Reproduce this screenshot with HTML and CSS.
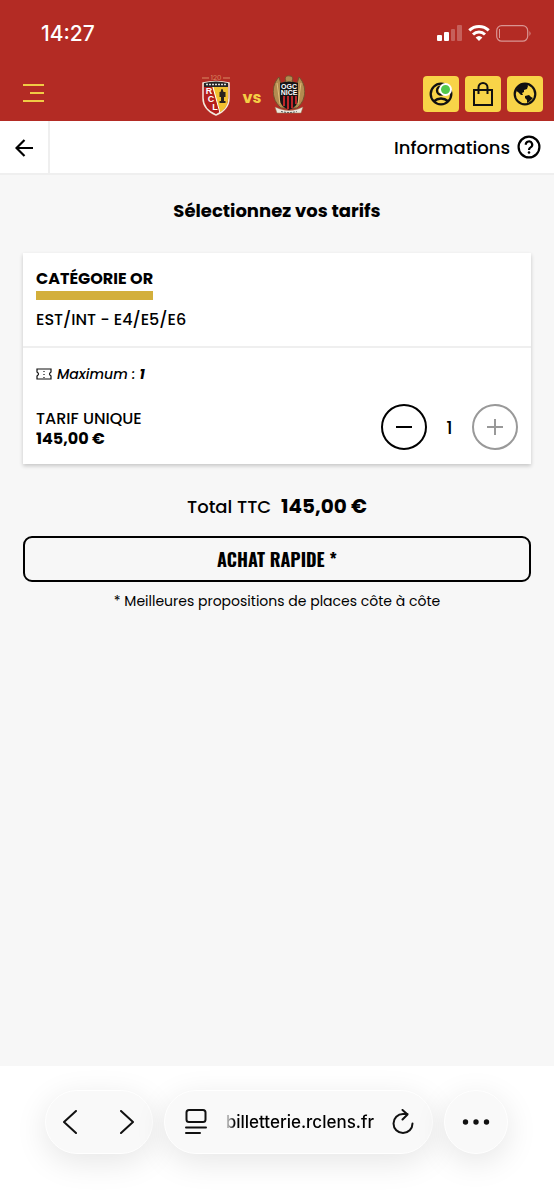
FILE: index.html
```html
<!DOCTYPE html>
<html lang="fr">

<head>
    <meta charset="UTF-8">
    <meta name="viewport" content="width=device-width, initial-scale=1.0">
    <title>Billetterie RC Lens</title>
    <link rel="stylesheet" href="styles.css">
</head>

<body>
    <header class="top">
        <div class="status">
            <span class="time">14:27</span>
            <svg class="status-icons" width="96" height="20" viewBox="0 0 96 20" fill="#fff">
                <rect x="1" y="12" width="5" height="6" rx="1" />
                <rect x="8" y="9" width="5" height="9" rx="1" />
                <rect x="15" y="6" width="4" height="12" rx="1" opacity=".25" />
                <rect x="21" y="2" width="5" height="16" rx="1" opacity=".25" />
                <g fill="none" stroke="#fff" stroke-width="3">
                    <path d="M33.3 7.3a14 14 0 0 1 19.4 0" />
                    <path d="M37 11.500a8.700 8.700 0 0 1 12 0" />
                </g>
                <path d="M43 18l-3.400-3.500a5 5 0 0 1 6.800 0z" />
                <g opacity=".5">
                    <rect x="60.700" y="2.700" width="31" height="15.500" rx="5" fill="none" stroke="#fff" stroke-width="1.200" />
                    <path d="M93.500 8v5q2-2.500 0-5z" />
                    <rect x="63" y="6" width="1" height="9" />
                </g>
            </svg>
        </div>
        <div class="navbar">
            <button class="menu" aria-label="Menu">
                <svg width="22" height="20" viewBox="0 0 22 20" stroke="#f0cb45" stroke-width="2">
                    <path d="M0 1h21M7 9h14M0 17h21" />
                </svg>
            </button>
            <div class="match">
                <svg width="30" height="44" viewBox="0 0 30 44">
                    <text x="15" y="7" class="years">120</text>
                    <path d="M1 5h7M22 5h7" stroke="#d98a62" stroke-width="1" />
                    <path d="M2 10q13-3 26 0v15c0 9-6 14-13 17C8 39 2 34 2 25z" fill="#b5201c" stroke="#f3e9dc" stroke-width="1.500" />
                    <path d="M11 13h16v12c0 8-4 12-8 14z" fill="#f2c230" />
                    <path d="M3 10q12-3 24 0v4H3z" fill="#252525" />
                    <path d="M5 11.500h20" stroke="#ddd" stroke-width="1.500" stroke-dasharray="2 1" />
                    <path d="M12 14l7 26" stroke="#fff" stroke-width="1" />
                    <path d="M20.500 16h1l1 3h2v5h-1.500v4h1.500v2h-6v-2H20v-4h-1.500v-5h1z" fill="#29231c" />
                    <g class="crest-letters">
                        <text x="8" y="21">R</text>
                        <text x="10" y="29">C</text>
                        <text x="14" y="37">L</text>
                    </g>
                </svg>
                <span class="vs">vs</span>
                <svg width="32" height="42" viewBox="0 0 32 42">
                    <path d="M13 7C11 4 13 1 17 2c3 0 3 3 2 5l5 3 2-7c5 5 7 13 5 20-1 5-4 8-7 11H8c-3-3-6-6-7-11C-1 16 1 8 6 3l2 7z" fill="#b38b50" stroke="#72512e" stroke-width="1" />
                    <path d="M4 9l3 21M28 9l-3 21" stroke="#e0bd7a" stroke-width="1" />
                    <path d="M7 9q9-3 18 0v17q0 6-9 10-9-4-9-10z" fill="#171415" />
                    <path d="M11 22v10M15 22v13M19 22v12M23 22v8" stroke="#bd2528" stroke-width="2" />
                    <g class="nice-letters">
                        <text x="16" y="15">OGC</text>
                        <text x="16" y="21">NICE</text>
                    </g>
                    <path d="M2 33l5 2q9 3 18 0l5-2-2 6H4z" fill="#ece8df" stroke="#99794f" stroke-width=".5" />
                    <path d="M8 37.500q8 2 16 0" fill="none" stroke="#555" stroke-width="1" stroke-dasharray="2 1" />
                </svg>
            </div>
            <div class="actions">
                <button class="action" aria-label="Mon compte">
                    <svg width="24" height="24" viewBox="0 0 24 24" fill="none" stroke="#111" stroke-width="2.300">
                        <circle cx="12" cy="12" r="10.300" />
                        <circle cx="12" cy="8.500" r="4" />
                        <path d="M4.500 19.500q7.500-6 15 0" />
                    </svg>
                    <span class="online"></span>
                </button>
                <button class="action" aria-label="Panier">
                    <svg width="24" height="26" viewBox="0 0 24 26" fill="none" stroke="#111" stroke-width="2">
                        <path d="M3 9h18v15H3zM7.500 13V6.500a4.500 4.500 0 0 1 9 0V13" />
                    </svg>
                </button>
                <button class="action" aria-label="Langue">
                    <svg width="24" height="24" viewBox="0 0 24 24" fill="#111">
                        <circle cx="12" cy="12" r="10.300" fill="none" stroke="#111" stroke-width="2.200" />
                        <path d="M5 5l4-3 5 0 1 2-1 3-3 1v2l-2 1 1 2-2 0-3-3-2-1zM12 14l4-1 2 2 2 1-4 4-2 1v-3l-2-2z" />
                    </svg>
                </button>
            </div>
        </div>
    </header>

    <nav class="subbar">
        <a href="#" class="back" aria-label="Retour">
            <svg width="18" height="18" viewBox="0 0 18 18" fill="none" stroke="#000" stroke-width="2.200">
                <path d="M18 9H2M9.500 1L1.500 9l8 8" />
            </svg>
        </a>
        <a href="#" class="infos">Informations
            <svg width="24" height="24" viewBox="0 0 24 24" fill="none" stroke="#000" stroke-width="2.200">
                <circle cx="12" cy="12" r="10.400" />
                <path d="M8.800 9.800a3.200 3.200 0 1 1 4.800 2.600Q12 13.300 12 15" />
                <circle cx="12" cy="17.500" r="1.300" fill="#000" stroke="none" />
            </svg>
        </a>
    </nav>

    <main>
        <h1>Sélectionnez vos tarifs</h1>

        <section class="card">
            <div class="category">
                <h2>CATÉGORIE OR</h2>
                <p>EST/INT - E4/E5/E6</p>
            </div>
            <div class="rates">
                <p class="maximum">
                    <svg width="16" height="12" viewBox="0 0 16 12" fill="none" stroke="#111" stroke-width="1.200">
                        <path d="M1 1h14v3q-3 2 0 4v3H1V8q3-2 0-4z" />
                        <path d="M8 3v7" stroke-dasharray="1 2" />
                    </svg>
                    <span>Maximum : <b>1</b></span>
                </p>
                <div class="rate">
                    <div class="rate-name">TARIF UNIQUE<br><b>145,00 €</b></div>
                    <div class="stepper">
                        <button id="minus" aria-label="Retirer une place">
                            <svg width="16" height="16" viewBox="0 0 16 16" stroke="currentColor" stroke-width="2">
                                <path d="M0 8h16" />
                            </svg>
                        </button>
                        <output>1</output>
                        <button id="plus" aria-label="Ajouter une place" disabled>
                            <svg width="16" height="16" viewBox="0 0 16 16" stroke="currentColor" stroke-width="2">
                                <path d="M0 8h16M8 0v16" />
                            </svg>
                        </button>
                    </div>
                </div>
            </div>
        </section>

        <p class="total">Total TTC <b>145,00 €</b></p>
        <button class="buy">ACHAT RAPIDE *</button>
        <p class="note">* Meilleures propositions de places côte à côte</p>
    </main>

    <footer class="browser">
        <div class="pill history">
            <button aria-label="Précédent">
                <svg width="14" height="24" viewBox="0 0 14 24"><path d="M13 1L1 12l12 11" /></svg>
            </button>
            <button aria-label="Suivant">
                <svg width="14" height="24" viewBox="0 0 14 24"><path d="M1 1l12 11L1 23" /></svg>
            </button>
        </div>
        <div class="pill address">
            <button aria-label="Options de page">
                <svg width="22" height="26" viewBox="0 0 22 26">
                    <rect x="1.500" y="1" width="19" height="12" rx="2.500" />
                    <path d="M1 18.500h20M1 24h14" />
                </svg>
            </button>
            <a href="#" class="url"><span>billetterie.rclens.fr</span></a>
            <button aria-label="Actualiser">
                <svg width="22" height="26" viewBox="0 0 22 26">
                    <path d="M20.500 14.500a9.500 9.500 0 1 1-9.500-9.500h4.500M10.500 1l5 4.500-5 5" />
                </svg>
            </button>
        </div>
        <button class="pill more" aria-label="Plus">
            <svg width="28" height="6" viewBox="0 0 28 6" class="dots">
                <circle cx="3.500" cy="3" r="2.700" />
                <circle cx="14" cy="3" r="2.700" />
                <circle cx="24.500" cy="3" r="2.700" />
            </svg>
        </button>
    </footer>
</body>

</html>
```

FILE: styles.css
```css
* {
    box-sizing: border-box;
}

body {
    margin: 0;
    min-height: 100vh;
    display: flex;
    flex-direction: column;
    background-color: #f7f7f7;
    color: #000;
    font-family: 'Poppins', 'Inter', sans-serif;
    font-size: 16px;
}

h1,
h2,
p {
    margin: 0;
}

a {
    color: inherit;
    text-decoration: none;
}

button {
    display: flex;
    align-items: center;
    justify-content: center;
    padding: 0;
    border: 0;
    background: none;
    color: inherit;
    font: inherit;
    cursor: pointer;
}

svg {
    display: block;
    flex: none;
}

/* red header */
.top {
    background-color: #b32b24;
}

.status {
    display: flex;
    align-items: center;
    justify-content: space-between;
    height: 66px;
    padding: 0 22px 0 41px;
    color: #fff;
}

.time {
    font-family: 'Inter', sans-serif;
    font-size: 21px;
    font-weight: 500;
}

.navbar {
    display: grid;
    grid-template-columns: 1fr auto 1fr;
    align-items: center;
    height: 55px;
    padding: 0 11px 0 23px;
}

.menu {
    justify-self: start;
}

.match {
    display: flex;
    align-items: center;
    gap: 12px;
    padding: 3px 60px 0 0;
}

.vs {
    padding-top: 4px;
    color: #f5ce45;
    font-size: 16px;
    font-weight: 700;
}

.years {
    fill: #d98a62;
    font-size: 7px;
    text-anchor: middle;
}

.crest-letters,
.nice-letters {
    fill: #fff;
    font-family: 'Liberation Sans', sans-serif;
    font-size: 9px;
    font-weight: 700;
    text-anchor: middle;
}

.nice-letters {
    font-size: 7px;
}

.actions {
    display: flex;
    justify-content: flex-end;
    gap: 6px;
}

.action {
    position: relative;
    width: 36px;
    height: 36px;
    border-radius: 4px;
    background-color: #f8d448;
}

.online {
    position: absolute;
    top: 7px;
    right: 7px;
    width: 13px;
    height: 13px;
    border: 2px solid #fff;
    border-radius: 50%;
    background-color: #52c84b;
}

/* back / informations */
.subbar {
    display: flex;
    justify-content: space-between;
    height: 54px;
    border-bottom: 2px solid #efefef;
    background-color: #fff;
}

.back {
    display: flex;
    align-items: center;
    justify-content: center;
    width: 50px;
    padding-top: 2px;
    border-right: 2px solid #efefef;
}

.infos {
    display: flex;
    align-items: center;
    gap: 7px;
    padding-right: 13px;
    font-size: 18px;
    font-weight: 500;
}

main {
    flex: 1;
    padding: 24px 23px;
}

h1 {
    margin-bottom: 30px;
    font-size: 18px;
    font-weight: 700;
    line-height: 24px;
    text-align: center;
}

.card {
    background-color: #fff;
    box-shadow: 0 2px 4px rgba(0, 0, 0, 0.2);
}

.category {
    padding: 14px 13px;
    border-bottom: 2px solid #efefef;
}

h2 {
    width: fit-content;
    margin-bottom: 8px;
    border-bottom: 9px solid #d3af3b;
    font-size: 16px;
    font-weight: 700;
    line-height: 24px;
}

.category p {
    font-weight: 500;
    line-height: 24px;
}

.rates {
    padding: 14px 13px;
}

.maximum {
    display: flex;
    align-items: center;
    gap: 5px;
    font-size: 14px;
    font-style: italic;
    font-weight: 500;
    line-height: 24px;
}

.rate {
    display: flex;
    align-items: center;
    justify-content: space-between;
    margin-top: 18px;
}

.rate-name {
    padding-top: 4px;
    font-weight: 500;
    line-height: 20px;
}

.stepper {
    display: flex;
    align-items: center;
}

.stepper button {
    width: 46px;
    height: 46px;
    border: 2px solid #000;
    border-radius: 50%;
}

.stepper button:disabled {
    border-color: #999;
    color: #999;
    cursor: default;
}

.stepper output {
    width: 45px;
    font-size: 18px;
    font-weight: 500;
    text-align: center;
}

.total {
    margin-top: 29px;
    font-size: 18px;
    font-weight: 500;
    line-height: 26px;
    text-align: center;
}

.total b {
    margin-left: 5px;
    font-size: 20px;
}

.buy {
    width: 100%;
    height: 46px;
    margin-top: 16px;
    border: 2px solid #000;
    border-radius: 9px;
    font-family: 'Oswald', 'DejaVu Sans Condensed', sans-serif;
    font-size: 18px;
    font-weight: 700;
}

.note {
    margin-top: 7px;
    font-size: 14px;
    line-height: 24px;
    text-align: center;
}

/* browser toolbar */
.browser {
    display: flex;
    gap: 11px;
    padding: 24px 46px 45px 45px;
    background-color: #fff;
    overflow: hidden;
}

.browser svg {
    fill: none;
    stroke: #111;
    stroke-width: 2;
    stroke-linecap: round;
    stroke-linejoin: round;
}

.browser .dots {
    fill: #111;
    stroke: none;
}

.pill {
    display: flex;
    align-items: center;
    height: 64px;
    border: 1px solid #fff;
    border-radius: 32px;
    background-color: #f9f9f9;
    box-shadow: 0 8px 32px rgba(0, 0, 0, 0.1);
}

.history {
    justify-content: space-between;
    width: 108px;
    padding: 0 18px 0 17px;
}

.address {
    flex: 1;
    min-width: 0;
    padding: 0 18px 0 20px;
}

.url {
    flex: 1;
    display: flex;
    justify-content: flex-end;
    min-width: 0;
    margin: 0 18px;
    overflow: hidden;
    font-family: 'Inter', sans-serif;
    font-size: 17px;
    font-weight: 500;
    white-space: nowrap;
    mask-image: linear-gradient(to right, transparent, #000 10px);
}

.more {
    justify-content: center;
    width: 64px;
}
```
